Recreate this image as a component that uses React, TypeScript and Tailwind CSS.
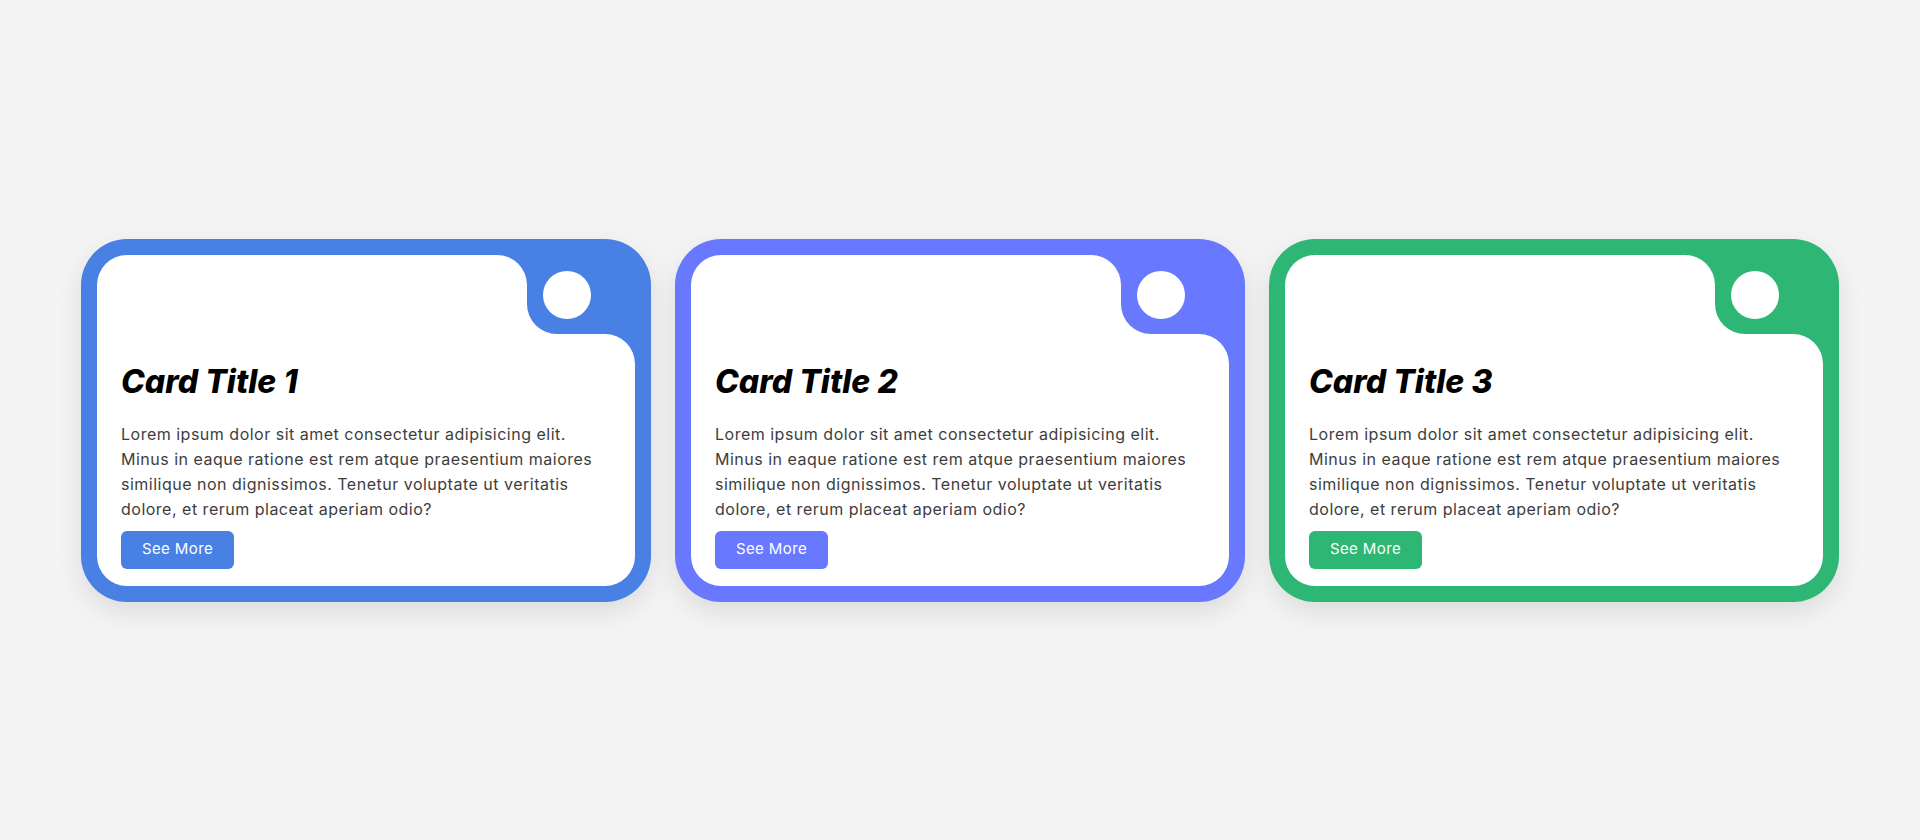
import React from "react";

type Card = { title: string; color: string };

const cards: Card[] = [
  { title: "Card Title 1", color: "blue" },
  { title: "Card Title 2", color: "purple" },
  { title: "Card Title 3", color: "green" },
];

const bgMap: Record<string, string> = {
  blue: "bg-[#4880e4]",
  purple: "bg-[#6879ff]",
  green: "bg-[#2db674]",
};

function CardView({ card }: { card: Card }) {
  const bg = bgMap[card.color];
  return (
    <div
      className={`${bg} flex w-[570px] flex-col rounded-[46px] p-4 shadow-[0_10px_28px_rgba(0,0,0,0.10)]`}
    >
      <div className="flex h-[79px]">
        <div className="flex-1 rounded-t-[30px] bg-white" />
        <div className="w-[108px] bg-white">
          <div className={`h-full w-full rounded-bl-[30px] p-4 ${bg}`}>
            <div className="h-12 w-12 rounded-full bg-white" />
          </div>
        </div>
      </div>
      <div className="rounded-tr-[30px] rounded-b-[30px] bg-white px-6 pt-6 pb-[17px]">
        <h2 className="text-[32px] leading-[48px] font-extrabold italic text-black">
          {card.title}
        </h2>
        <p className="mt-4 text-[16px] leading-[25px] tracking-[0.5px] text-[#3d3d3d]">
          Lorem ipsum dolor sit amet consectetur adipisicing elit. Minus in eaque ratione est
          rem atque praesentium maiores similique non dignissimos. Tenetur voluptate ut
          veritatis dolore, et rerum placeat aperiam odio?
        </p>
        <button
          className={`${bg} mt-[9px] flex h-[38px] w-[113px] items-center justify-center rounded-md text-[15px] tracking-[0.4px] text-white`}
        >
          See More
        </button>
      </div>
    </div>
  );
}

export default function App() {
  return (
    <div
      className="flex h-[840px] w-full items-center justify-center gap-6 bg-[#f4f4f4]"
      style={{ fontFamily: "Inter, 'Open Sans', sans-serif" }}
    >
      {cards.map((c) => (
        <CardView key={c.title} card={c} />
      ))}
    </div>
  );
}
